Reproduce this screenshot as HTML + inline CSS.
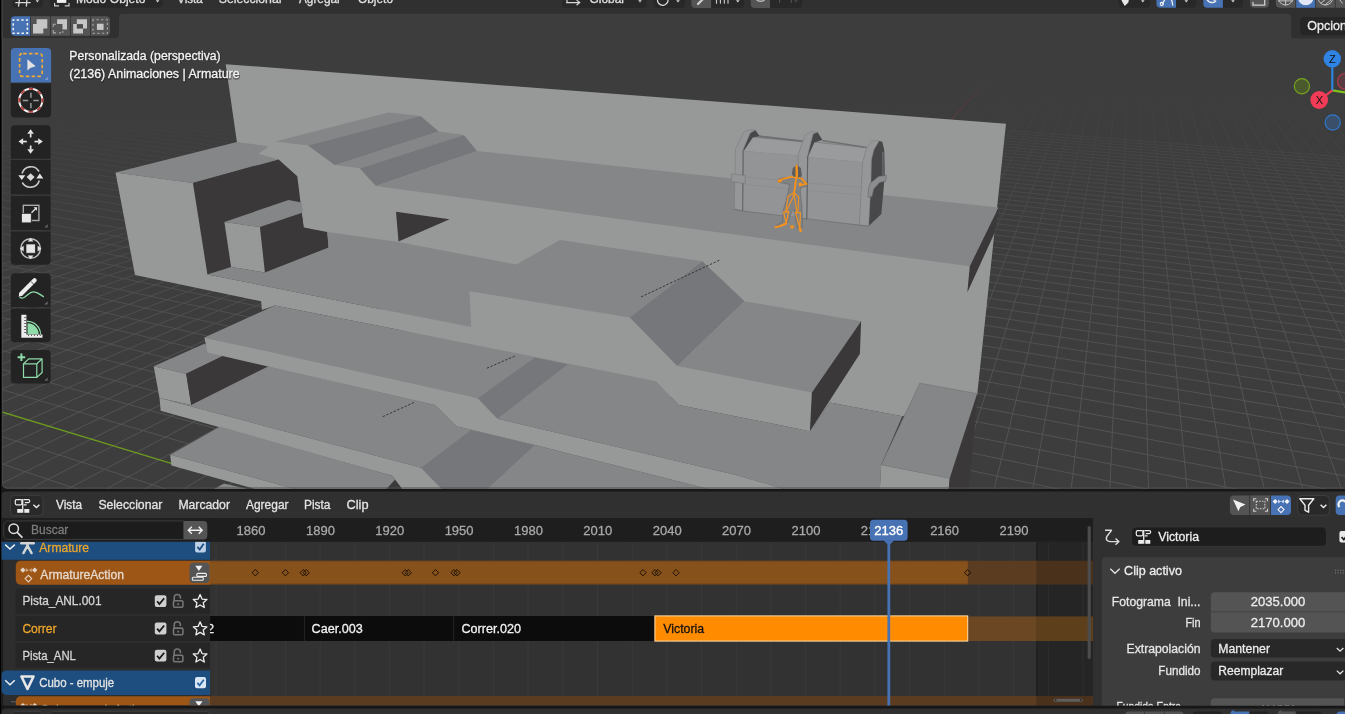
<!DOCTYPE html>
<html><head><meta charset="utf-8"><title>Blender</title>
<style>
html,body{margin:0;padding:0}
body{width:1345px;height:714px;overflow:hidden;background:#171717;position:relative;font-family:"Liberation Sans",sans-serif;font-size:12px;color:#e6e6e6}
#vp{position:absolute;left:1.7px;top:0;width:1344px;height:488.7px;background:#3d3d3d;border-radius:0 0 0 5px;overflow:hidden}
.abs{position:absolute}

</style></head>
<body>
<div id="ledge" class="abs" style="left:0;top:0;width:0.7px;height:714px;background:#000"></div>
<div id="vp">
<svg id="scene" width="1345" height="490" viewBox="0 0 1345 490" style="position:absolute;left:-1.7px;top:0">
<defs>
<linearGradient id="gf" x1="0" y1="118" x2="8" y2="438" gradientUnits="userSpaceOnUse">
<stop offset="0" stop-color="#fff" stop-opacity="0"/><stop offset="0.1" stop-color="#fff" stop-opacity="0.22"/><stop offset="0.3" stop-color="#fff" stop-opacity="0.5"/><stop offset="0.6" stop-color="#fff" stop-opacity="0.8"/><stop offset="1" stop-color="#fff" stop-opacity="1"/>
</linearGradient>
<linearGradient id="gf2" x1="0" y1="0" x2="0" y2="1"><stop offset="0" stop-color="#fff" stop-opacity="0"/><stop offset="0.15" stop-color="#fff" stop-opacity="0"/><stop offset="0.4" stop-color="#fff" stop-opacity="1"/><stop offset="1" stop-color="#fff" stop-opacity="1"/></linearGradient>
<mask id="gm2" maskUnits="userSpaceOnUse" x="0" y="0" width="1345" height="490"><rect x="0" y="0" width="1345" height="490" fill="url(#gf2)"/></mask>
<mask id="gm" maskUnits="userSpaceOnUse" x="0" y="0" width="1345" height="490"><rect x="0" y="0" width="1345" height="490" fill="url(#gf)"/></mask>
</defs>
<g mask="url(#gm)"><g stroke="#5a5a5a" stroke-width="0.9" opacity="0.9">
<line x1="-779.2" y1="500" x2="678.0" y2="60"/>
<line x1="-739.9" y1="500" x2="687.4" y2="60"/>
<line x1="-700.5" y1="500" x2="696.8" y2="60"/>
<line x1="-661.2" y1="500" x2="706.2" y2="60"/>
<line x1="-621.8" y1="500" x2="715.5" y2="60"/>
<line x1="-582.5" y1="500" x2="724.9" y2="60"/>
<line x1="-543.2" y1="500" x2="734.3" y2="60"/>
<line x1="-503.8" y1="500" x2="743.7" y2="60"/>
<line x1="-464.5" y1="500" x2="753.1" y2="60"/>
<line x1="-425.1" y1="500" x2="762.5" y2="60"/>
<line x1="-385.8" y1="500" x2="771.9" y2="60"/>
<line x1="-346.4" y1="500" x2="781.3" y2="60"/>
<line x1="-307.1" y1="500" x2="790.7" y2="60"/>
<line x1="-267.7" y1="500" x2="800.1" y2="60"/>
<line x1="-228.4" y1="500" x2="809.5" y2="60"/>
<line x1="-189.0" y1="500" x2="818.9" y2="60"/>
<line x1="-149.7" y1="500" x2="828.3" y2="60"/>
<line x1="-110.3" y1="500" x2="837.7" y2="60"/>
<line x1="-71.0" y1="500" x2="847.1" y2="60"/>
<line x1="-31.7" y1="500" x2="856.5" y2="60"/>
<line x1="7.7" y1="500" x2="865.8" y2="60"/>
<line x1="47.0" y1="500" x2="875.2" y2="60"/>
<line x1="86.4" y1="500" x2="884.6" y2="60"/>
<line x1="125.7" y1="500" x2="894.0" y2="60"/>
<line x1="165.1" y1="500" x2="903.4" y2="60"/>
<line x1="204.4" y1="500" x2="912.8" y2="60"/>
<line x1="243.8" y1="500" x2="922.2" y2="60"/>
<line x1="283.1" y1="500" x2="931.6" y2="60"/>
<line x1="322.5" y1="500" x2="941.0" y2="60"/>
<line x1="361.8" y1="500" x2="950.4" y2="60"/>
<line x1="401.2" y1="500" x2="959.8" y2="60"/>
<line x1="440.5" y1="500" x2="969.2" y2="60"/>
<line x1="479.8" y1="500" x2="978.6" y2="60"/>
<line x1="519.2" y1="500" x2="988.0" y2="60"/>
<line x1="558.5" y1="500" x2="997.4" y2="60"/>
<line x1="637.2" y1="500" x2="1016.2" y2="60"/>
<line x1="676.6" y1="500" x2="1025.5" y2="60"/>
<line x1="715.9" y1="500" x2="1034.9" y2="60"/>
<line x1="755.3" y1="500" x2="1044.3" y2="60"/>
<line x1="794.6" y1="500" x2="1053.7" y2="60"/>
<line x1="834.0" y1="500" x2="1063.1" y2="60"/>
<line x1="873.3" y1="500" x2="1072.5" y2="60"/>
<line x1="912.7" y1="500" x2="1081.9" y2="60"/>
<line x1="952.0" y1="500" x2="1091.3" y2="60"/>
<line x1="991.3" y1="500" x2="1100.7" y2="60"/>
<line x1="1030.7" y1="500" x2="1110.1" y2="60"/>
<line x1="1070.0" y1="500" x2="1119.5" y2="60"/>
<line x1="1109.4" y1="500" x2="1128.9" y2="60"/>
<line x1="1148.7" y1="500" x2="1138.3" y2="60"/>
<line x1="1188.1" y1="500" x2="1147.7" y2="60"/>
<line x1="1227.4" y1="500" x2="1157.1" y2="60"/>
<line x1="1266.8" y1="500" x2="1166.5" y2="60"/>
<line x1="1306.1" y1="500" x2="1175.9" y2="60"/>
<line x1="1345.5" y1="500" x2="1185.2" y2="60"/>
<line x1="1384.8" y1="500" x2="1194.6" y2="60"/>
<line x1="1424.2" y1="500" x2="1204.0" y2="60"/>
<line x1="1463.5" y1="500" x2="1213.4" y2="60"/>
<line x1="1502.8" y1="500" x2="1222.8" y2="60"/>
<line x1="1542.2" y1="500" x2="1232.2" y2="60"/>
<line x1="1581.5" y1="500" x2="1241.6" y2="60"/>
<line x1="1620.9" y1="500" x2="1251.0" y2="60"/>
<line x1="1660.2" y1="500" x2="1260.4" y2="60"/>
<line x1="1699.6" y1="500" x2="1269.8" y2="60"/>
<line x1="1738.9" y1="500" x2="1279.2" y2="60"/>
<line x1="1778.3" y1="500" x2="1288.6" y2="60"/>
<line x1="1817.6" y1="500" x2="1298.0" y2="60"/>
<line x1="1857.0" y1="500" x2="1307.4" y2="60"/>
<line x1="1896.3" y1="500" x2="1316.8" y2="60"/>
<line x1="1935.7" y1="500" x2="1326.2" y2="60"/>
<line x1="1975.0" y1="500" x2="1335.6" y2="60"/>
<line x1="2014.3" y1="500" x2="1344.9" y2="60"/>
<line x1="2053.7" y1="500" x2="1354.3" y2="60"/>
<line x1="2093.0" y1="500" x2="1363.7" y2="60"/>
<line x1="2132.4" y1="500" x2="1373.1" y2="60"/>
<line x1="-1329.7" y1="60" x2="376.5" y2="900"/>
<line x1="-1308.0" y1="60" x2="530.3" y2="900"/>
<line x1="-1286.3" y1="60" x2="684.1" y2="900"/>
<line x1="-1264.6" y1="60" x2="837.9" y2="900"/>
<line x1="-1242.9" y1="60" x2="991.8" y2="900"/>
<line x1="-1221.2" y1="60" x2="1145.6" y2="900"/>
<line x1="-1199.5" y1="60" x2="1299.4" y2="900"/>
<line x1="-1177.8" y1="60" x2="1453.2" y2="900"/>
<line x1="-1134.4" y1="60" x2="1760.8" y2="900"/>
<line x1="-1112.7" y1="60" x2="1914.6" y2="900"/>
<line x1="-1091.0" y1="60" x2="2068.4" y2="900"/>
<line x1="-1069.3" y1="60" x2="2222.2" y2="900"/>
<line x1="-1047.6" y1="60" x2="2376.0" y2="900"/>
<line x1="-1025.8" y1="60" x2="2529.9" y2="900"/>
<line x1="-1004.1" y1="60" x2="2683.7" y2="900"/>
<line x1="-982.4" y1="60" x2="2837.5" y2="900"/>
<line x1="-960.7" y1="60" x2="2991.3" y2="900"/>
<line x1="-939.0" y1="60" x2="3145.1" y2="900"/>
<line x1="-917.3" y1="60" x2="3298.9" y2="900"/>
<line x1="-895.6" y1="60" x2="3452.7" y2="900"/>
<line x1="-873.9" y1="60" x2="3606.5" y2="900"/>
<line x1="-852.2" y1="60" x2="3760.3" y2="900"/>
<line x1="-830.5" y1="60" x2="3914.1" y2="900"/>
<line x1="-808.8" y1="60" x2="4067.9" y2="900"/>
<line x1="-787.1" y1="60" x2="4221.8" y2="900"/>
<line x1="-765.4" y1="60" x2="4375.6" y2="900"/>
<line x1="-743.7" y1="60" x2="4529.4" y2="900"/>
<line x1="-722.0" y1="60" x2="4683.2" y2="900"/>
<line x1="-700.3" y1="60" x2="4837.0" y2="900"/>
<line x1="-678.6" y1="60" x2="4990.8" y2="900"/>
<line x1="-656.9" y1="60" x2="5144.6" y2="900"/>
<line x1="-635.2" y1="60" x2="5298.4" y2="900"/>
<line x1="-613.5" y1="60" x2="5452.2" y2="900"/>
<line x1="-591.8" y1="60" x2="5606.0" y2="900"/>
<line x1="-570.1" y1="60" x2="5759.9" y2="900"/>
<line x1="-548.4" y1="60" x2="5913.7" y2="900"/>
<line x1="-526.7" y1="60" x2="6067.5" y2="900"/>
<line x1="-505.0" y1="60" x2="6221.3" y2="900"/>
<line x1="-483.3" y1="60" x2="6375.1" y2="900"/>
<line x1="-461.6" y1="60" x2="6528.9" y2="900"/>
<line x1="-439.9" y1="60" x2="6682.7" y2="900"/>
<line x1="-418.2" y1="60" x2="6836.5" y2="900"/>
<line x1="-396.5" y1="60" x2="6990.3" y2="900"/>
<line x1="-374.8" y1="60" x2="7144.1" y2="900"/>
<line x1="-353.1" y1="60" x2="7298.0" y2="900"/>
<line x1="-331.3" y1="60" x2="7451.8" y2="900"/>
<line x1="-309.6" y1="60" x2="7605.6" y2="900"/>
<line x1="-287.9" y1="60" x2="7759.4" y2="900"/>
<line x1="-266.2" y1="60" x2="7913.2" y2="900"/>
<line x1="-244.5" y1="60" x2="8067.0" y2="900"/>
<line x1="-222.8" y1="60" x2="8220.8" y2="900"/>
<line x1="-201.1" y1="60" x2="8374.6" y2="900"/>
<line x1="-179.4" y1="60" x2="8528.4" y2="900"/>
<line x1="-157.7" y1="60" x2="8682.2" y2="900"/>
<line x1="-136.0" y1="60" x2="8836.0" y2="900"/>
<line x1="-114.3" y1="60" x2="8989.9" y2="900"/>
<line x1="-92.6" y1="60" x2="9143.7" y2="900"/>
<line x1="-70.9" y1="60" x2="9297.5" y2="900"/>
<line x1="-49.2" y1="60" x2="9451.3" y2="900"/>
<line x1="-27.5" y1="60" x2="9605.1" y2="900"/>
<line x1="-5.8" y1="60" x2="9758.9" y2="900"/>
<line x1="15.9" y1="60" x2="9912.7" y2="900"/>
<line x1="37.6" y1="60" x2="10066.5" y2="900"/>
<line x1="59.3" y1="60" x2="10220.3" y2="900"/>
<line x1="81.0" y1="60" x2="10374.1" y2="900"/>
<line x1="102.7" y1="60" x2="10528.0" y2="900"/>
<line x1="124.4" y1="60" x2="10681.8" y2="900"/>
</g></g>
<g mask="url(#gm2)"><line x1="-1156.1" y1="60.0" x2="172" y2="463.7" stroke="#6c9a1f" stroke-width="1.3"/>
<line x1="597.9" y1="500" x2="1006.8" y2="60" stroke="#9a3545" stroke-width="1.1"/></g>
<polygon points="225.7,64.2 1006.0,123.7 977.3,393.7 902.3,416.2 829.9,402.4 809.9,431.2 400.0,330.0 236.9,141.9" fill="#979998" />
<polygon points="236.9,141.9 115.5,172.4 192.9,182.9 278.6,159.4 290.0,150.0 267.4,146.2" fill="#858688" />
<polygon points="275.0,141.5 388.3,112.4 420.5,116.0 308.0,145.5" fill="#858688" />
<polygon points="308.0,145.5 420.5,116.0 438.8,131.5 335.0,165.3" fill="#76777a" />
<polygon points="335.0,165.3 438.8,131.5 463.8,135.0 359.5,168.4" fill="#858688" />
<polygon points="359.5,168.4 463.8,135.0 477.0,151.0 376.0,186.1" fill="#76777a" />
<polygon points="376.0,186.1 477.0,151.0 998.5,207.4 969.8,266.2" fill="#858688" />
<polygon points="998.5,207.4 969.8,266.2 967.3,292.4 994.8,232.5" fill="#3b3839" />
<polygon points="258.6,153.7 274.9,141.9 307.3,145.4 333.6,164.9 359.8,168.2 374.8,186.1 400.0,195.0 400.0,250.0 303.6,227.5 297.3,176.2 278.6,159.4" fill="#979998" />
<polygon points="192.9,182.9 278.6,159.4 297.3,176.2 303.6,227.5 327.3,232.0 328.6,247.5 264.9,272.4 231.1,267.0 207.4,274.4" fill="#3b3839" />
<polygon points="224.4,222.0 288.5,200.0 301.5,202.5 302.9,212.5 259.9,227.0" fill="#858688" />
<polygon points="224.4,222.0 259.9,227.0 264.9,272.4 231.1,267.0" fill="#979998" />
<polygon points="396.0,211.7 449.6,219.3 398.5,241.6" fill="#3b3839" />
<polygon points="115.5,172.4 192.9,182.9 207.4,274.4 400.0,312.9 471.2,326.9 469.4,291.2 629.8,317.4 677.3,366.1 811.9,392.4 809.9,431.2 678.5,404.9 656.0,381.2 400.0,330.0 274.9,305.4 261.9,309.9 261.1,301.2 135.0,275.0" fill="#979998" />
<polygon points="207.4,274.4 231.1,267.0 264.9,272.4 328.6,247.5 327.3,232.0 398.5,242.0 516.2,264.5 559.9,240.0 702.3,261.2 629.8,317.4 469.4,291.2 471.2,326.9 400.0,312.9" fill="#858688" />
<polygon points="702.3,261.2 744.5,301.2 677.3,366.1 629.8,317.4" fill="#76777a" />
<polygon points="744.5,301.2 861.1,321.2 811.9,392.4 677.3,366.1" fill="#858688" />
<polygon points="861.1,321.2 811.9,392.4 809.9,431.2 859.9,353.7" fill="#3b3839" />
<polygon points="274.9,305.4 400.0,330.0 656.0,381.2 678.5,404.9 809.9,431.2 829.9,402.4 902.3,416.2 881.1,464.9 879.9,490.0 787.4,490.0 736.0,474.9 497.4,418.7 477.9,398.2 436.0,392.4 204.4,337.5" fill="#858688" />
<polygon points="534.9,357.5 567.4,364.5 497.4,418.7 477.9,398.2" fill="#76777a" />
<polygon points="153.7,366.2 204.4,343.7 222.4,356.2 186.2,373.7" fill="#858688" />
<polygon points="153.7,366.2 186.2,373.7 191.2,404.9 159.5,397.9" fill="#979998" />
<polygon points="186.2,373.7 222.4,356.2 268.6,366.2 191.2,404.9" fill="#3b3839" />
<polygon points="191.2,404.9 268.6,366.2 435.0,405.0 456.2,426.2 534.9,444.9 712.3,490.0 442.7,490.0 421.2,467.8 159.5,397.9" fill="#858688" />
<polygon points="421.2,467.8 471.2,429.9 534.9,444.9 486.2,490.0 442.7,490.0" fill="#76777a" />
<polygon points="204.4,337.5 477.9,398.2 497.4,418.7 736.0,474.9 787.4,490.0 712.3,490.0 534.9,444.9 456.2,426.2 435.0,405.0 207.4,352.5" fill="#979998" />
<polygon points="159.5,397.9 421.2,467.8 442.7,490.0 402.2,490.0 392.7,476.1 160.7,410.7" fill="#979998" />
<polygon points="220.2,426.6 392.7,476.1 402.2,490.0 298.7,490.0 170.2,454.7" fill="#858688" />
<polygon points="385.5,490.0 395.0,479.7 403.0,490.0" fill="#3b3839" />
<polygon points="170.2,454.7 298.7,490.0 258.7,490.0 171.4,465.4" fill="#979998" />
<polygon points="212.0,490.0 224.0,483.5 252.0,490.0" fill="#858688" />
<polygon points="919.8,383.2 977.3,393.7 949.8,478.6 881.1,464.9" fill="#858688" stroke="#6d6e70" stroke-width="0.6"/>
<polygon points="881.1,464.9 949.8,478.6 948.6,490.0 879.9,490.0" fill="#979998" />
<polygon points="977.3,393.7 949.8,478.6 948.6,490.0 968.5,490.0 974.8,424.9" fill="#3b3839" />
<line x1="641.1" y1="296.9" x2="719.8" y2="260.0" stroke="#222" stroke-width="0.8" stroke-dasharray="2.4 1.6"/>
<line x1="486.9" y1="368.2" x2="515.7" y2="355.7" stroke="#222" stroke-width="0.8" stroke-dasharray="2.4 1.6"/>
<line x1="382.7" y1="416.7" x2="415.3" y2="401.9" stroke="#222" stroke-width="0.8" stroke-dasharray="2.4 1.6"/>
<polygon points="743.5,136.0 759.5,135.5 866.4,147.3 879.0,140.9 884.0,150.0 884.7,175.5 881.3,214.1 868.7,226.0 859.5,225.0 742.7,210.8" fill="#7c7d7f" />
<polygon points="752.7,137.5 802.3,142.2 798.1,155.6 743.9,151.0" fill="#999b9c" />
<polygon points="814.3,142.6 866.4,148.1 862.6,162.3 808.4,157.3" fill="#999b9c" />
<polygon points="743.9,151.0 798.1,155.6 799.0,219.0 742.7,210.8" fill="#929495" />
<polygon points="808.4,157.3 862.6,162.3 859.5,225.0 806.8,219.5" fill="#929495" />
<polyline points="759.5,136.2 802.3,141.2" fill="none" stroke="#6e6f71" stroke-width="1.5" />
<polyline points="822.3,140.5 866.4,147.6" fill="none" stroke="#6e6f71" stroke-width="1.5" />
<polyline points="745.2,177.0 799.0,182.0" fill="none" stroke="#858789" stroke-width="0.5" />
<polyline points="745.2,184.5 799.0,189.8" fill="none" stroke="#86888a" stroke-width="0.5" />
<polyline points="808.0,183.0 862.9,187.5" fill="none" stroke="#858789" stroke-width="0.5" />
<polyline points="808.0,190.5 862.5,195.2" fill="none" stroke="#86888a" stroke-width="0.5" />
<polygon points="879.0,140.9 882.3,141.8 884.2,149.7 884.7,175.5 881.3,214.1 868.7,226.0 871.0,182.0 871.4,159.8 873.9,149.7" fill="#48484a" />
<polyline points="882.8,152.0 883.0,176.0" fill="none" stroke="#8a8b8d" stroke-width="0.7" />
<polygon points="862.6,162.3 866.4,148.1 871.4,141.3 876.1,140.7 879.0,140.9 873.9,149.7 871.4,159.8 871.0,182.0 868.7,226.0 859.5,225.0" fill="#959798" stroke="#77787a" stroke-width="0.5"/>
<polygon points="870.4,183.0 878.8,176.3 886.4,175.5 885.5,181.3 879.7,182.5 873.8,188.9 872.1,196.5 867.9,197.3 868.7,187.2" fill="#8c8d8f" stroke="#5e5f61" stroke-width="0.5"/>
<polygon points="755.3,130.0 759.5,135.9 752.7,137.5 743.9,150.6 743.1,149.7 750.2,132.9" fill="#48484a" />
<polygon points="734.3,209.1 735.5,148.9 743.1,132.9 746.0,130.8 749.4,130.0 755.3,130.0 750.2,132.9 743.1,149.7 742.7,210.8" fill="#959798" stroke="#77787a" stroke-width="0.5"/>
<polyline points="743.1,150.0 742.7,210.8" fill="none" stroke="#5e5f61" stroke-width="0.9" />
<polygon points="731.4,173.8 745.2,175.5 745.2,183.5 731.4,181.8" fill="#939596" stroke="#707173" stroke-width="0.5"/>
<polygon points="817.6,132.1 822.3,140.1 814.3,142.6 807.6,156.5 807.6,155.6 813.0,134.0" fill="#48484a" />
<polygon points="799.0,219.0 798.1,155.6 802.3,142.2 805.7,134.6 810.9,131.7 817.6,132.1 813.0,134.0 807.6,155.6 806.8,219.5" fill="#959798" stroke="#77787a" stroke-width="0.5"/>
<polyline points="807.6,156.0 806.8,219.5" fill="none" stroke="#5e5f61" stroke-width="1" />
<polyline points="734.3,209.3 742.7,211.0 859.5,225.2 868.7,226.2" fill="none" stroke="#6b6c6e" stroke-width="0.7" />
<polygon points="792.9,168.0 796.6,164.8 800.9,168.0 801.9,176.0 798.7,178.1 793.9,177.6 791.8,173.8" fill="#5c5d5f" />
<polygon points="789.7,177.6 801.9,177.6 807.2,182.9 806.7,186.1 800.9,187.7 800.3,191.9 801.9,204.7 802.4,219.6 801.9,228.1 797.9,229.1 795.5,219.6 794.5,210.0 791.8,211.1 787.6,222.8 777.4,228.1 775.3,226.5 782.2,221.7 783.3,210.0 786.0,200.4 788.1,191.9 789.7,184.5 781.7,182.9 778.0,182.3 778.5,179.1 783.8,177.6" fill="#808284" stroke="#626365" stroke-width="0.5"/>
<polyline points="796.6,165.9 796.8,176.0" fill="none" stroke="#f5921e" stroke-width="2.4" stroke-linejoin="round" stroke-linecap="round"/>
<polyline points="796.4,176.5 795.5,184.5 793.9,193.0" fill="none" stroke="#f5921e" stroke-width="1.7" stroke-linejoin="round" stroke-linecap="round"/>
<polyline points="793.9,193.0 795.5,188.2 794.7,182.9" fill="none" stroke="#f5921e" stroke-width="0.9" stroke-linejoin="round" stroke-linecap="round"/>
<polyline points="791.3,177.0 801.9,178.6" fill="none" stroke="#f5921e" stroke-width="1.3" stroke-linejoin="round" stroke-linecap="round"/>
<polyline points="791.3,176.8 782.8,178.9 778.7,181.1" fill="none" stroke="#f5921e" stroke-width="1.7" stroke-linejoin="round" stroke-linecap="round"/>
<polygon points="777.7,179.7 781.5,178.9 781.9,181.8 778.5,182.9" fill="#f5921e" />
<polyline points="801.9,178.6 806.7,183.9 800.3,185.3" fill="none" stroke="#f5921e" stroke-width="1.5" stroke-linejoin="round" stroke-linecap="round"/>
<polygon points="798.5,182.9 801.9,182.6 802.4,186.1 798.9,186.6" fill="#f5921e" />
<polyline points="801.9,178.9 803.8,182.9 806.7,184.3" fill="none" stroke="#f5921e" stroke-width="0.9" stroke-linejoin="round" stroke-linecap="round"/>
<polyline points="793.9,192.4 788.1,196.2 785.7,211.9" fill="none" stroke="#f5921e" stroke-width="1.1" stroke-linejoin="round" stroke-linecap="round"/>
<polyline points="793.9,192.4 792.9,197.2 786.0,211.9" fill="none" stroke="#f5921e" stroke-width="1.1" stroke-linejoin="round" stroke-linecap="round"/>
<polyline points="793.9,192.4 798.7,197.2 797.9,211.9" fill="none" stroke="#f5921e" stroke-width="1.1" stroke-linejoin="round" stroke-linecap="round"/>
<polyline points="793.9,192.4 794.7,197.8 796.8,211.9" fill="none" stroke="#f5921e" stroke-width="1.1" stroke-linejoin="round" stroke-linecap="round"/>
<polyline points="783.6,212.1 788.7,211.7 786.2,223.4 783.6,212.1" fill="none" stroke="#f5921e" stroke-width="1.2" stroke-linejoin="round" stroke-linecap="round"/>
<polyline points="795.5,212.3 800.4,212.8 799.8,228.1 795.5,212.3" fill="none" stroke="#f5921e" stroke-width="1.2" stroke-linejoin="round" stroke-linecap="round"/>
<polyline points="786.2,223.4 780.6,226.0 775.5,227.2" fill="none" stroke="#f5921e" stroke-width="2.2" stroke-linejoin="round" stroke-linecap="round"/>
<polyline points="799.8,228.1 800.6,231.1" fill="none" stroke="#f5921e" stroke-width="2.4" stroke-linejoin="round" stroke-linecap="round"/>
<circle cx="792.0" cy="226.8" r="1.9" fill="#f5921e"/>
</svg>
<!-- viewport overlays: coordinates in page space via svg offset -->
<svg class="abs" style="left:-1.7px;top:0;will-change:transform" width="1345" height="490" viewBox="0 0 1345 490">
<!-- area outline highlight -->
<path d="M2.200 38V483.500a4.500 4.500 0 0 0 4.500 4.500H1345" fill="none" stroke="#4f4f4f" stroke-width="1"/>
<!-- toolbar -->
<path d="M14.800 48H47.100a4 4 0 0 1 4 4V82.400H10.800V52a4 4 0 0 1 4 -4Z" fill="#4772b3"/>
<path d="M10.800 83.200H51.100V113.600a4 4 0 0 1 -4 4H14.800a4 4 0 0 1 -4 -4Z" fill="#232323"/>
<path d="M14.800 125.200H46.600a4 4 0 0 1 4 4V158.800H10.800V129.200a4 4 0 0 1 4 -4Z" fill="#232323"/>
<rect x="10.800" y="159.900" width="39.800" height="34.600" fill="#232323"/>
<rect x="10.800" y="195.800" width="39.800" height="34.400" fill="#232323"/>
<path d="M10.800 231.500H50.600V260.700a4 4 0 0 1 -4 4H14.800a4 4 0 0 1 -4 -4Z" fill="#232323"/>
<path d="M14.800 273.300H46.600a4 4 0 0 1 4 4V307.200H10.800V277.300a4 4 0 0 1 4 -4Z" fill="#232323"/>
<path d="M10.800 308.400H50.600V338.200a4 4 0 0 1 -4 4H14.800a4 4 0 0 1 -4 -4Z" fill="#232323"/>
<rect x="10.800" y="350" width="39.800" height="33.500" rx="4" fill="#232323"/>
<!-- select icon -->
<rect x="19.600" y="53.700" width="22.600" height="22.600" rx="2.500" fill="none" stroke="#eda835" stroke-width="1.700" stroke-dasharray="3.600 2.200" stroke-dashoffset="-1"/>
<path d="M27.400 59.200V70.600L30.300 68.100L35.700 66.300Z" fill="#e2e2e2"/>
<path d="M44.600 80H48.100V76.500Z" fill="#7d9acb"/>
<!-- cursor icon -->
<circle cx="30.800" cy="100.300" r="11.600" fill="none" stroke="#f4f4f4" stroke-width="1.900"/>
<circle cx="30.800" cy="100.300" r="11.600" fill="none" stroke="#b5423f" stroke-width="1.900" stroke-dasharray="4.550 4.550" stroke-dashoffset="2.300"/>
<path d="M22.800 100.500H28.200M33.400 100.500H38.800M30.900 92.800V97.800M30.900 103V108.200" stroke="#9a9a9a" stroke-width="1.500"/>
<!-- move icon -->
<g fill="#e4e4e4">
<path d="M30.600 129.200L33.900 133.800H27.300Z"/><path d="M30.600 153.800L33.900 149.200H27.300Z"/>
<path d="M18.500 141.500L23.100 138.200V144.800Z"/><path d="M42.800 141.500L38.200 138.200V144.800Z"/>
<rect x="29.800" y="133.500" width="1.700" height="4"/><rect x="29.800" y="145.500" width="1.700" height="4"/>
<rect x="22.800" y="140.700" width="4" height="1.700"/><rect x="34.500" y="140.700" width="4" height="1.700"/>
</g>
<!-- rotate icon -->
<path d="M22 173.500a9.300 9.300 0 0 1 17 -2M39.300 180.500a9.300 9.300 0 0 1 -17 2" fill="none" stroke="#c9c9c9" stroke-width="1.600"/>
<path d="M18.300 175.200H25.300L21.800 180Z" fill="#e4e4e4"/><path d="M36.300 178.500H43.300L39.800 173.600Z" fill="#e4e4e4"/>
<path d="M30.600 173.300L34.600 177.100L30.600 180.900L26.600 177.100Z" fill="#d9d9d9"/>
<!-- scale icon -->
<rect x="23.300" y="205.300" width="15.600" height="15.200" fill="none" stroke="#a9a9a9" stroke-width="1.400"/>
<rect x="21.400" y="213.300" width="9.900" height="9.600" fill="#e6e6e6" stroke="#232323" stroke-width="0.800"/>
<path d="M31.500 212.800L36 208.200" stroke="#e6e6e6" stroke-width="1.300"/><path d="M33.600 207.300H37V210.700Z" fill="#e6e6e6"/>
<path d="M44.400 227.400H47.600V224.200Z" fill="#6a6a6a"/>
<!-- transform icon -->
<circle cx="30.600" cy="248.500" r="9.800" fill="none" stroke="#bdbdbd" stroke-width="1.500"/>
<rect x="26" y="244" width="9.300" height="9.200" fill="#e6e6e6" stroke="#232323" stroke-width="0.700"/>
<g fill="#e4e4e4"><path d="M30.600 237.800L33.400 241.600H27.800Z"/><path d="M30.600 259.300L33.400 255.500H27.800Z"/><path d="M19.900 248.600L23.700 245.800V251.400Z"/><path d="M41.400 248.600L37.600 245.800V251.400Z"/></g>
<!-- annotate icon -->
<path d="M19.600 297.200C25 301 28 291.500 33.500 291.800C38.500 292 40 295 43.800 296.800" fill="none" stroke="#8fdcaa" stroke-width="1.300"/>
<path d="M21.200 293.800L34.600 280.300" stroke="#ececec" stroke-width="4.200" stroke-linecap="round"/>
<path d="M18.600 296.700L19.600 292.600L22.500 295.500Z" fill="#ececec"/>
<path d="M31.200 281.800L33.800 284.200" stroke="#232323" stroke-width="0.800"/>
<path d="M44.400 304.500H47.600V301.300Z" fill="#6a6a6a"/>
<!-- measure icon -->
<path d="M27.500 334.200V323.200A11.200 11.200 0 0 1 38.700 334.200Z" fill="#8fdcaa"/>
<path d="M27 321.400A13.300 13.300 0 0 1 40.600 334.200" fill="none" stroke="#8fdcaa" stroke-width="1.100"/>
<path d="M21.300 314.800H26.400V334.400H42.500V337.800H21.300Z" fill="#ececec"/>
<path d="M24.200 317.500H26M24.200 320.500H26M24.200 323.500H26M24.200 326.500H26M24.200 329.500H26M24.200 332.500H26M28.500 334.800V336M31.500 334.800V336M34.500 334.800V336M37.500 334.800V336M40.300 334.800V336" stroke="#232323" stroke-width="0.700"/>
<!-- add cube icon -->
<g fill="none" stroke="#8fdcaa" stroke-width="1.200" stroke-linejoin="round">
<path d="M23.500 363.800H36.800V377.400H23.500Z"/><path d="M23.500 363.800L28.700 358.900H42.100L36.800 363.800M42.100 358.900V372.500L36.800 377.400"/>
</g>
<path d="M17.600 357.300H25.200M21.400 353.500V361.100" stroke="#8fdcaa" stroke-width="2"/>
<path d="M44.400 380.800H47.600V377.600Z" fill="#6a6a6a"/>
<!-- viewport text -->
<g font-family="Liberation Sans, sans-serif" font-size="12.300">
<g fill="#1c1c1c" stroke="#1c1c1c" stroke-width="1.600" opacity="0.450" stroke-linejoin="round">
<text x="69.600" y="60.300" textLength="151.300" lengthAdjust="spacingAndGlyphs">Personalizada (perspectiva)</text>
<text x="69.600" y="78.900" textLength="170.300" lengthAdjust="spacingAndGlyphs">(2136) Animaciones | Armature</text></g>
<g fill="#f4f4f4" stroke="#f4f4f4" stroke-width="0.300">
<text x="69.300" y="59.800" textLength="151.300" lengthAdjust="spacingAndGlyphs">Personalizada (perspectiva)</text>
<text x="69.300" y="78.400" textLength="170.300" lengthAdjust="spacingAndGlyphs">(2136) Animaciones | Armature</text></g>
</g>
<!-- gizmo -->
<g>
<circle cx="1345.500" cy="81.300" r="8" fill="#5b3b42" stroke="#b03c4c" stroke-width="1.200"/>
<path d="M1332.300 90.300L1345 92.400" stroke="#7fc01c" stroke-width="2.200"/>
<path d="M1332.300 90.300V60" stroke="#2f83e3" stroke-width="2.200"/>
<path d="M1332.300 90.300L1321 99" stroke="#f03c57" stroke-width="2.200"/>
<circle cx="1301.900" cy="86.300" r="7.600" fill="#4b5a2c" stroke="#79a621" stroke-width="1.200"/>
<circle cx="1332.700" cy="122.500" r="7.600" fill="#3a4f6a" stroke="#2f78cc" stroke-width="1.200"/>
<circle cx="1332.300" cy="58.800" r="8.700" fill="#2f83e3"/>
<circle cx="1319.200" cy="100" r="8.900" fill="#f03c57"/>
<g font-family="Liberation Sans, sans-serif" font-size="11" fill="#101010" text-anchor="middle">
<text x="1332.300" y="62.700">Z</text><text x="1319.300" y="104">X</text></g>
</g>
</svg>

</div>
<!-- top header strip -->
<svg class="abs" style="left:0;top:0;will-change:transform" width="1345" height="40" viewBox="0 0 1345 40">
<defs><clipPath id="hc"><rect x="0" y="0" width="1345" height="14"/></clipPath></defs>
<!-- header bg + tool settings region + options region -->
<path d="M1.7 0H1345V38.6H1295a4 4 0 0 1 -4 -4V17.8a4 4 0 0 0 -4 -4H123a4 4 0 0 0 -4 4V34a4 4 0 0 1 -4 4H1.7Z" fill="#303030"/>
<rect x="1.7" y="0" width="1" height="38" fill="#474747"/>
<g fill="#282828">
<rect x="12" y="-12" width="30.8" height="19.8" rx="4"/>
<rect x="50.2" y="-12" width="112.5" height="19.8" rx="4"/>
<rect x="561.9" y="-12" width="84.7" height="20.1" rx="4"/>
<rect x="653.4" y="-12" width="31.7" height="20.1" rx="4"/>
<rect x="691.3" y="-12" width="52.7" height="20.1" rx="4"/>
<rect x="750.7" y="-12" width="51.6" height="20.1" rx="4"/>
<rect x="1118.6" y="-12" width="31.4" height="19.8" rx="4"/>
<rect x="1156.4" y="-12" width="40" height="19.8" rx="4"/>
<rect x="1203.3" y="-12" width="39.7" height="19.8" rx="4"/>
</g>
<path d="M691.3 -5H711.1V8.1H695.3a4 4 0 0 1 -4 -4Z" fill="#545454"/>
<path d="M750.7 -5H770V8.1H754.7a4 4 0 0 1 -4 -4Z" fill="#545454"/>
<path d="M1156.4 -5H1176V7.8H1160.4a4 4 0 0 1 -4 -4Z" fill="#4772b3"/>
<path d="M1203.3 -5H1222.9V7.8H1207.3a4 4 0 0 1 -4 -4Z" fill="#4772b3"/>
<rect x="1250" y="-12" width="19" height="19.8" rx="4" fill="#545454"/>
<path d="M1275.8 -5H1295.4V7.8H1279.8a4 4 0 0 1 -4 -4Z" fill="#545454"/>
<rect x="1296.2" y="-5" width="19" height="12.8" fill="#4772b3"/>
<rect x="1316" y="-5" width="18.8" height="12.8" fill="#545454"/>
<rect x="1335.6" y="-5" width="12" height="12.8" fill="#545454"/>
<!-- icons -->
<g stroke="#d8d8d8" stroke-width="1.3" fill="none" stroke-linecap="round">
<path d="M15.8 2.7H30.1M19.6 -2L18.6 6M27 -2L26.4 6"/>
<path d="M54.6 3.4V5.9H58.5M69 3.4V5.9H65.2" stroke="#cfcfcf" stroke-width="1.2"/>
<path d="M567 2.2L567 -3M566.5 2.6H579.5M577 0.4L579.7 2.6L577 4.8" stroke-width="1.2"/>
<path d="M658 -2a5.2 5.2 0 1 0 8 -2" stroke-width="1.4"/>
<path d="M698 4L704 -2" stroke="#cfcfcf" stroke-width="2.2"/>
<path d="M715 -0.5H729M716.5 -4V3.2M720.4 -4V3.2M724.3 -4V3.2M728 -4V3.2" stroke="#cfcfcf" stroke-width="1.1"/>
<path d="M755.4 -3a5.3 5.3 0 0 0 10.4 0" stroke="#bdbdbd" stroke-width="1.3"/>
<path d="M776 -4c3 1 4 4 3.6 6.500M795 -4c-3 1 -4 4 -3.600 6.500" stroke="#555" stroke-width="1.1"/>
<path d="M1206.600 -2a5.500 5.500 0 0 0 9 3.200" stroke="#f0f0f0" stroke-width="1.5"/>
<path d="M1162.300 3.700L1166.500 -3M1169.500 -3C1171.500 -1 1172.500 2 1172.700 5" stroke="#f0f0f0" stroke-width="1.300"/>
<circle cx="1161.800" cy="4" r="1.600" stroke="#f0f0f0" stroke-width="1.100"/>
<path d="M1253 2.500V5.200H1264.700V-3" stroke="#cfcfcf" stroke-width="1.300"/>
<path d="M1278 -2.600a7.600 7.600 0 0 0 15.200 0M1278.500 0.900H1292.700M1285.600 -3V5" stroke="#c4c4c4" stroke-width="1"/>
<path d="M1317.800 -2.600a7.600 7.600 0 0 0 15.200 0M1321 3L1328.500 -3M1325 5L1332 -1" stroke="#c4c4c4" stroke-width="1"/>
<path d="M1339.500 -2a6 6 0 0 0 3 5.200" stroke="#cfcfcf" stroke-width="1"/>
</g>
<path d="M1297.900 -4H1313.600V-2.600a7.850 7.850 0 0 1 -15.700 0Z" fill="#e2e8f3"/>
<path d="M56.900 -3H66.300V2.900H56.900Z" fill="#f0f0f0"/>
<circle cx="760.600" cy="-3.400" r="3.600" fill="#bdbdbd"/>
<path d="M1120.500 -2L1129.200 -2L1128.300 2.600L1124.800 6.100L1122.200 1.700Z" fill="#e6e6e6"/>
<path d="M1212.500 -4h4.500v3.500a3 3 0 0 1 -4.500 0.500Z" fill="#f0f0f0"/>
<g fill="#d8d8d8">
<path d="M35.700 0.200H39.100L37.400 2.600Z"/>
<path d="M155.800 0.200H159.400L157.600 2.600Z"/>
<path d="M638.200 0.200H641.800L640 2.600Z"/>
<path d="M676.200 0.200H679.800L678 2.600Z"/>
<path d="M736 0.200H739.600L737.800 2.600Z"/>
<path d="M1141 0.200H1144.600L1142.800 2.600Z"/>
<path d="M1184.500 0.200H1188.100L1186.300 2.600Z"/>
<path d="M1231.200 0.200H1234.800L1233 2.600Z"/>
</g>
<path d="M794 0.200H797.600L795.800 2.600Z" fill="#4a4a4a"/>
<g font-family="Liberation Sans, sans-serif" font-size="12.3" fill="#e0e0e0" clip-path="url(#hc)" stroke="#e0e0e0" stroke-width="0.28">
<text x="76" y="2.600" textLength="69.500" lengthAdjust="spacingAndGlyphs">Modo Objeto</text>
<text x="177.200" y="2.600" textLength="25.500" lengthAdjust="spacingAndGlyphs">Vista</text>
<text x="218.800" y="2.600" textLength="64" lengthAdjust="spacingAndGlyphs">Seleccionar</text>
<text x="299" y="2.600" textLength="42" lengthAdjust="spacingAndGlyphs">Agregar</text>
<text x="358" y="2.600" textLength="35" lengthAdjust="spacingAndGlyphs">Objeto</text>
<text x="589.500" y="2.600" textLength="34.500" lengthAdjust="spacingAndGlyphs">Global</text>
</g>
<!-- select mode buttons -->
<path d="M14.800 16.200H30.200V35.800H14.800a4 4 0 0 1 -4 -4V20.200a4 4 0 0 1 4 -4Z" fill="#4772b3"/>
<rect x="31" y="16.200" width="19" height="19.600" fill="#545454"/>
<rect x="50.800" y="16.200" width="19.200" height="19.600" fill="#545454"/>
<rect x="70.800" y="16.200" width="19.200" height="19.600" fill="#545454"/>
<path d="M90.800 16.200H106a4 4 0 0 1 4 4V31.800a4 4 0 0 1 -4 4H90.800Z" fill="#545454"/>
<rect x="13.200" y="19.900" width="14.200" height="13.400" fill="none" stroke="#f2f2f2" stroke-width="1.500" stroke-dasharray="2.500 2.100" stroke-dashoffset="1.200"/>
<path d="M36.600 19.200H47.300V28.600H43.300V33.500H33V24.100H36.600Z" fill="#c6c6c6"/>
<path d="M57.100 19.200H67V29.500H62.500V24.100H57.100Z" fill="#c6c6c6"/>
<path d="M53.300 27V24.300H56M53.300 30V32.900H56M59 32.900H61M62.800 32.900V31" fill="none" stroke="#a8a8a8" stroke-width="1.100"/>
<path d="M76.800 19.200H87V28.600H83V33.500H73.200V24.100H76.800Z" fill="#c6c6c6"/>
<rect x="76.800" y="24.100" width="6.200" height="4.500" fill="#4c4c4c"/>
<rect x="93" y="19.800" width="14.400" height="13.500" fill="none" stroke="#a8a8a8" stroke-width="1.100" stroke-dasharray="2.300 2.300" stroke-dashoffset="1.100"/>
<rect x="96.900" y="23.700" width="6.700" height="6.200" fill="#c6c6c6"/>
<!-- options button -->
<path d="M1304 17H1345V35.300H1304a4 4 0 0 1 -4 -4V21a4 4 0 0 1 4 -4Z" fill="#262626"/>
<text x="1307.300" y="30.300" font-family="Liberation Sans, sans-serif" font-size="12.500" fill="#ececec" stroke="#ececec" stroke-width="0.28">Opciones</text>
</svg>

<svg class="abs" style="left:0;top:0;will-change:transform" width="1345" height="714" viewBox="0 0 1345 714" font-family="Liberation Sans, sans-serif">
<defs><clipPath id="nc"><path d="M5.700 491.400H1345V705.600H5.400a4 4 0 0 1 -4 -4V540H1.700V495.400a4 4 0 0 1 4 -4Z"/></clipPath>
<clipPath id="tc"><rect x="209.8" y="541.800" width="883.2" height="164"/></clipPath>
<clipPath id="cc"><rect x="0" y="541.600" width="210.1" height="164"/></clipPath></defs>
<g clip-path="url(#nc)">
<rect x="0" y="491" width="1345" height="215" fill="#303030"/>
<rect x="0" y="541.600" width="209.8" height="165" fill="#2d2d2d"/>
<rect x="209.8" y="518.100" width="883.2" height="188" fill="#323232"/>
<rect x="1036.8" y="541.800" width="56.2" height="165" fill="#252525"/>
<g clip-path="url(#tc)">
<rect x="215.52" y="541" width="1" height="165" fill="#3a3a3a"/>
<rect x="250.20" y="541" width="1" height="165" fill="#3a3a3a"/>
<rect x="284.88" y="541" width="1" height="165" fill="#3a3a3a"/>
<rect x="319.56" y="541" width="1" height="165" fill="#3a3a3a"/>
<rect x="354.24" y="541" width="1" height="165" fill="#3a3a3a"/>
<rect x="388.92" y="541" width="1" height="165" fill="#3a3a3a"/>
<rect x="423.60" y="541" width="1" height="165" fill="#3a3a3a"/>
<rect x="458.28" y="541" width="1" height="165" fill="#3a3a3a"/>
<rect x="492.96" y="541" width="1" height="165" fill="#3a3a3a"/>
<rect x="527.64" y="541" width="1" height="165" fill="#3a3a3a"/>
<rect x="562.32" y="541" width="1" height="165" fill="#3a3a3a"/>
<rect x="597.00" y="541" width="1" height="165" fill="#3a3a3a"/>
<rect x="631.68" y="541" width="1" height="165" fill="#3a3a3a"/>
<rect x="666.36" y="541" width="1" height="165" fill="#3a3a3a"/>
<rect x="701.04" y="541" width="1" height="165" fill="#3a3a3a"/>
<rect x="735.72" y="541" width="1" height="165" fill="#3a3a3a"/>
<rect x="770.40" y="541" width="1" height="165" fill="#3a3a3a"/>
<rect x="805.08" y="541" width="1" height="165" fill="#3a3a3a"/>
<rect x="839.76" y="541" width="1" height="165" fill="#3a3a3a"/>
<rect x="874.44" y="541" width="1" height="165" fill="#3a3a3a"/>
<rect x="909.12" y="541" width="1" height="165" fill="#3a3a3a"/>
<rect x="943.80" y="541" width="1" height="165" fill="#3a3a3a"/>
<rect x="978.48" y="541" width="1" height="165" fill="#3a3a3a"/>
<rect x="1013.16" y="541" width="1" height="165" fill="#3a3a3a"/>
<rect x="1047.84" y="541" width="1" height="165" fill="#2e2e2e"/>
<rect x="1082.52" y="541" width="1" height="165" fill="#2e2e2e"/>
<rect x="1036.3" y="541" width="1" height="165" fill="#1c1c1c"/>
<rect x="209.8" y="560.700" width="758.1" height="23.800" fill="#7b4a1c"/>
<rect x="209.8" y="562.200" width="758.1" height="21" fill="#87511c"/>
<rect x="967.9" y="560.700" width="68.9" height="23.800" fill="#5b3c20"/>
<rect x="1036.8" y="560.700" width="56.2" height="23.800" fill="#4a311c"/>
<path d="M252.1 572.7L255.3 569.5L258.5 572.7L255.3 575.9Z" fill="none" stroke="#1e1105" stroke-width="1"/>
<path d="M282.2 572.7L285.4 569.5L288.6 572.7L285.4 575.9Z" fill="none" stroke="#1e1105" stroke-width="1"/>
<path d="M432.3 572.7L435.5 569.5L438.7 572.7L435.5 575.9Z" fill="none" stroke="#1e1105" stroke-width="1"/>
<path d="M639.8 572.7L643.0 569.5L646.2 572.7L643.0 575.9Z" fill="none" stroke="#1e1105" stroke-width="1"/>
<path d="M672.8 572.7L676.0 569.5L679.2 572.7L676.0 575.9Z" fill="none" stroke="#1e1105" stroke-width="1"/>
<path d="M964.4 572.7L967.6 569.5L970.8 572.7L967.6 575.9Z" fill="none" stroke="#1e1105" stroke-width="1"/>
<path d="M300.0 572.7L303.2 569.5L306.4 572.7L303.2 575.9Z" fill="none" stroke="#1e1105" stroke-width="1"/>
<path d="M303.0 572.7L306.2 569.5L309.4 572.7L306.2 575.9Z" fill="none" stroke="#1e1105" stroke-width="1"/>
<path d="M402.0 572.7L405.2 569.5L408.4 572.7L405.2 575.9Z" fill="none" stroke="#1e1105" stroke-width="1"/>
<path d="M405.0 572.7L408.2 569.5L411.4 572.7L408.2 575.9Z" fill="none" stroke="#1e1105" stroke-width="1"/>
<path d="M450.8 572.7L454.0 569.5L457.2 572.7L454.0 575.9Z" fill="none" stroke="#1e1105" stroke-width="1"/>
<path d="M453.8 572.7L457.0 569.5L460.2 572.7L457.0 575.9Z" fill="none" stroke="#1e1105" stroke-width="1"/>
<path d="M651.8 572.7L655.0 569.5L658.2 572.7L655.0 575.9Z" fill="none" stroke="#1e1105" stroke-width="1"/>
<path d="M654.8 572.7L658.0 569.5L661.2 572.7L658.0 575.9Z" fill="none" stroke="#1e1105" stroke-width="1"/>
<rect x="209.8" y="616" width="444.8" height="25" fill="#0c0c0c"/>
<rect x="303.900" y="616" width="1" height="25" fill="#242424"/><rect x="453.100" y="616" width="1" height="25" fill="#242424"/>
<rect x="968" y="616.400" width="68.8" height="24.600" fill="#6b4823"/>
<rect x="1036.8" y="616.400" width="56.2" height="24.600" fill="#5e3f1b"/>
<rect x="654.900" y="615.900" width="312.800" height="25.200" fill="#ff8c00" stroke="#ffdcaa" stroke-width="1"/>
<g font-size="12.300" fill="#f2f2f2" stroke="#f2f2f2" stroke-width="0.28">
<text x="207.300" y="633">2</text>
<text x="311.600" y="633" textLength="51.200" lengthAdjust="spacingAndGlyphs">Caer.003</text>
<text x="461.500" y="633" textLength="59.400" lengthAdjust="spacingAndGlyphs">Correr.020</text>
<text x="663.300" y="633" textLength="40.800" lengthAdjust="spacingAndGlyphs" fill="#111" stroke="#111" stroke-width="0.28">Victoria</text></g>
<rect x="209.8" y="696" width="827.0" height="12" fill="#5b3c20"/>
<rect x="1036.8" y="696" width="56.2" height="12" fill="#4a311c"/>
</g>
<rect x="209.8" y="518.100" width="883.2" height="23.700" fill="#1e1e1e"/>
<g font-size="13" fill="#a9a9a9" text-anchor="middle" stroke="#a9a9a9" stroke-width="0.28">
<text x="251.0" y="535">1860</text>
<text x="320.4" y="535">1890</text>
<text x="389.7" y="535">1920</text>
<text x="459.1" y="535">1950</text>
<text x="528.4" y="535">1980</text>
<text x="597.8" y="535">2010</text>
<text x="667.2" y="535">2040</text>
<text x="736.5" y="535">2070</text>
<text x="805.9" y="535">2100</text>
<text x="875.2" y="535">2130</text>
<text x="944.6" y="535">2160</text>
<text x="1014.0" y="535">2190</text>
</g>
<rect x="887.4" y="541" width="2.800" height="165" fill="#4772b3"/>
<path d="M883.3 540.200L888.8 545.600L894.3 540.200Z" fill="#4772b3"/>
<rect x="870.0" y="519.700" width="37.600" height="21" rx="3.500" fill="#4772b3"/>
<text x="888.8" y="535" font-size="13" fill="#ffffff" text-anchor="middle" stroke="#fff" stroke-width="0.350">2136</text>
<rect x="1087.600" y="526" width="3.200" height="133" rx="1.600" fill="#4c4c4c"/>
<rect x="1053.600" y="698.700" width="29.300" height="3" rx="1.500" fill="#5f5f5f"/>
<rect x="1054.800" y="699.400" width="1.600" height="1.600" fill="#222"/><rect x="1080" y="699.400" width="1.600" height="1.600" fill="#222"/>
<rect x="10.700" y="701" width="5.300" height="1.400" fill="#505050"/>
<g clip-path="url(#cc)">
<rect x="0" y="541.600" width="3.100" height="165" fill="#1a1a1a"/>
<path d="M5.400 534.700H210.100V559.800H1.400V538.700a4 4 0 0 1 4 -4Z" fill="#1d4e7f"/>
<path d="M5.200 544.600L10 549L14.800 544.600" fill="none" stroke="#f0f0f0" stroke-width="1.500"/>
<g stroke="#d4d4d4" stroke-width="2.600" stroke-linecap="round" fill="none"><path d="M21.300 543.300H33.700M27.500 543.300V546.500M27.300 546L23.500 553M27.700 546L31.500 553"/></g>
<circle cx="27.500" cy="539.800" r="2" fill="#d4d4d4"/>
<text x="39.300" y="551.700" font-size="12.300" fill="#eea62a" textLength="49.800" lengthAdjust="spacingAndGlyphs" stroke="#eea62a" stroke-width="0.28">Armature</text>
<rect x="195.1" y="540.8" width="10.8" height="11.6" rx="2" fill="#bcd0e8"/><path d="M197.4 546.8L199.7 549.5L203.7 543.7" fill="none" stroke="#1d4e7f" stroke-width="1.800"/>
<path d="M20.800 560.700H210.100V584.700H20.800a5 5 0 0 1 -5 -5V565.700a5 5 0 0 1 5 -5Z" fill="#9e5616"/>
<path d="M20.2 570.1L22.9 567.4L25.6 570.1L22.9 572.8Z" fill="#e3d6c8" stroke="none" stroke-width="1.100"/>
<path d="M32.0 570.1L34.7 567.4L37.4 570.1L34.7 572.8Z" fill="#e3d6c8" stroke="none" stroke-width="1.100"/>
<path d="M25.800 568L31.800 572.200V568L25.800 572.200Z" fill="#c9a27c"/>
<path d="M25.1 578.6L28.4 575.3L31.7 578.6L28.4 581.9Z" fill="none" stroke="#e3d6c8" stroke-width="1.100"/>
<text x="40.300" y="578.500" font-size="12.300" fill="#e6dbd0" textLength="83.600" lengthAdjust="spacingAndGlyphs" stroke="#e6dbd0" stroke-width="0.28">ArmatureAction</text>
<rect x="189.500" y="562.800" width="20.100" height="20.100" rx="4" fill="#545454"/>
<path d="M195.300 565.800H202.500L198.900 570.900Z" fill="#f0f0f0"/>
<rect x="196.800" y="573.400" width="9.600" height="3" rx="1" fill="none" stroke="#f0f0f0" stroke-width="1.100"/><rect x="192.300" y="577.200" width="11" height="3" rx="1" fill="#545454" stroke="#f0f0f0" stroke-width="1.100"/>
<rect x="15.500" y="588.6" width="195" height="25.0" fill="#262626"/>
<text x="22.400" y="605.4" font-size="12.300" fill="#d6d6d6" textLength="79.2" lengthAdjust="spacingAndGlyphs" stroke="#d6d6d6" stroke-width="0.28">Pista_ANL.001</text>
<rect x="154.8" y="595.2" width="11.6" height="11.8" rx="2" fill="#cfcfcf"/><path d="M157.1 601.3L159.4 604.1L164.2 598.2" fill="none" stroke="#1a1a1a" stroke-width="1.800"/>
<path d="M174.2 600.9V597.5a3.100 3.100 0 0 1 6.200 0V598.7" fill="none" stroke="#767676" stroke-width="1.550"/><rect x="173.5" y="600.7" width="9.400" height="6.600" rx="1.200" fill="none" stroke="#767676" stroke-width="1.550"/><rect x="177.3" y="603.3" width="1.800" height="1.800" fill="#767676"/>
<polygon points="200.10,594.50 202.04,599.03 206.95,599.48 203.24,602.72 204.33,607.52 200.10,605.00 195.87,607.52 196.96,602.72 193.25,599.48 198.16,599.03" fill="none" stroke="#ececec" stroke-width="1.300" stroke-linejoin="round"/>
<rect x="15.500" y="616.1" width="195" height="24.7" fill="#262626"/>
<text x="22.400" y="632.8" font-size="12.300" fill="#eea62a" textLength="34.2" lengthAdjust="spacingAndGlyphs" stroke="#eea62a" stroke-width="0.28">Correr</text>
<rect x="154.8" y="622.6" width="11.6" height="11.8" rx="2" fill="#cfcfcf"/><path d="M157.1 628.7L159.4 631.4L164.2 625.5" fill="none" stroke="#1a1a1a" stroke-width="1.800"/>
<path d="M174.2 628.2V624.9a3.100 3.100 0 0 1 6.200 0V626.1" fill="none" stroke="#767676" stroke-width="1.550"/><rect x="173.5" y="628.1" width="9.400" height="6.600" rx="1.200" fill="none" stroke="#767676" stroke-width="1.550"/><rect x="177.3" y="630.7" width="1.800" height="1.800" fill="#767676"/>
<polygon points="200.10,621.85 202.04,626.38 206.95,626.83 203.24,630.07 204.33,634.87 200.10,632.35 195.87,634.87 196.96,630.07 193.25,626.83 198.16,626.38" fill="none" stroke="#ececec" stroke-width="1.300" stroke-linejoin="round"/>
<rect x="15.500" y="643.2" width="195" height="24.8" fill="#262626"/>
<text x="22.400" y="659.9" font-size="12.300" fill="#d6d6d6" textLength="53.5" lengthAdjust="spacingAndGlyphs" stroke="#d6d6d6" stroke-width="0.28">Pista_ANL</text>
<rect x="154.8" y="649.7" width="11.6" height="11.8" rx="2" fill="#cfcfcf"/><path d="M157.1 655.8L159.4 658.6L164.2 652.7" fill="none" stroke="#1a1a1a" stroke-width="1.800"/>
<path d="M174.2 655.4V652.0a3.100 3.100 0 0 1 6.200 0V653.2" fill="none" stroke="#767676" stroke-width="1.550"/><rect x="173.5" y="655.2" width="9.400" height="6.600" rx="1.200" fill="none" stroke="#767676" stroke-width="1.550"/><rect x="177.3" y="657.8" width="1.800" height="1.800" fill="#767676"/>
<polygon points="200.10,649.00 202.04,653.53 206.95,653.98 203.24,657.22 204.33,662.02 200.10,659.50 195.87,662.02 196.96,657.22 193.25,653.98 198.16,653.53" fill="none" stroke="#ececec" stroke-width="1.300" stroke-linejoin="round"/>
<path d="M6.400 670.400H210.100V695H6.400a5 5 0 0 1 -5 -5V675.400a5 5 0 0 1 5 -5Z" fill="#1d4e7f"/>
<path d="M5.200 680.300L10 684.700L14.800 680.300" fill="none" stroke="#f0f0f0" stroke-width="1.500"/>
<path d="M21.500 676.500H33.500L27.500 689Z" fill="none" stroke="#e8e8e8" stroke-width="2.600" stroke-linejoin="round"/>
<text x="39.200" y="687" font-size="12.300" fill="#e4e4e4" textLength="75" lengthAdjust="spacingAndGlyphs" stroke="#e4e4e4" stroke-width="0.28">Cubo - empuje</text>
<rect x="195.0" y="676.9" width="11.0" height="11.4" rx="2" fill="#dbe6f4"/><path d="M197.3 682.8L199.6 685.4L203.8 679.8" fill="none" stroke="#2a66a8" stroke-width="1.800"/>
<path d="M20.800 696.200H210.100V720H15.800V701.200a5 5 0 0 1 5 -5Z" fill="#9e5616"/>
<path d="M20.2 705.6L22.9 702.9L25.6 705.6L22.9 708.3Z" fill="#e3d6c8" stroke="none" stroke-width="1.100"/>
<path d="M32.0 705.6L34.7 702.9L37.4 705.6L34.7 708.3Z" fill="#e3d6c8" stroke="none" stroke-width="1.100"/>
<path d="M25.800 703.500L31.800 707.700V703.500L25.800 707.700Z" fill="#c9a27c"/>
<rect x="189.500" y="698.300" width="20.100" height="20.100" rx="4" fill="#545454"/>
<path d="M195.300 701.300H202.500L198.900 706.400Z" fill="#f0f0f0"/>
<text x="40.300" y="714" font-size="12.300" fill="#e6dbd0" stroke="#e6dbd0" stroke-width="0.28">Cubo-empujeAction</text>
</g>
<rect x="0" y="518.100" width="210.3" height="23.600" fill="#1e1e1e"/>
<path d="M8.200 520.900H183.700V539.400H8.200a4.500 4.500 0 0 1 -4.500 -4.500V525.400a4.500 4.500 0 0 1 4.500 -4.500Z" fill="#1c1c1c" stroke="#3c3c3c" stroke-width="1"/>
<path d="M183.700 520.900H203.300a4 4 0 0 1 4 4V535.400a4 4 0 0 1 -4 4H183.700Z" fill="#555555"/>
<path d="M188.500 530.200H202M191.800 526.700L188.300 530.200L191.800 533.700M198.700 526.700L202.200 530.200L198.700 533.700" fill="none" stroke="#f0f0f0" stroke-width="1.400"/>
<circle cx="13.700" cy="528.700" r="4.700" fill="none" stroke="#e0e0e0" stroke-width="1.500"/><path d="M17 532.200L22.400 537.600" stroke="#e0e0e0" stroke-width="1.700"/>
<text x="31" y="533.900" font-size="12.300" fill="#7c7c7c" textLength="37.300" lengthAdjust="spacingAndGlyphs" stroke="#7c7c7c" stroke-width="0.28">Buscar</text>
<rect x="10.500" y="495.300" width="32.500" height="20.400" rx="4" fill="#292929" stroke="#3e3e3e" stroke-width="1"/>
<g fill="none" stroke="#ececec" stroke-width="1.200"><rect x="15.3" y="499.6" width="6.600" height="5.200" rx="1.200"/><path d="M23.6 499.6H28.2a1.500 1.500 0 0 1 0 3H24.8M23.6 504.8H26.6"/><path d="M22.7 499.0V512.8" stroke-width="1.300"/></g><rect x="17.2" y="509.0" width="4.800" height="3.800" fill="#ececec"/><rect x="24.3" y="509.0" width="5" height="3.800" fill="#ececec"/>
<path d="M33.400 504.700L36.400 507.600L39.400 504.700" fill="none" stroke="#ececec" stroke-width="1.400"/>
<g font-size="12.300" fill="#e4e4e4" stroke="#e4e4e4" stroke-width="0.28">
<text x="56.0" y="509" textLength="26.0" lengthAdjust="spacingAndGlyphs">Vista</text>
<text x="98.4" y="509" textLength="64.0" lengthAdjust="spacingAndGlyphs">Seleccionar</text>
<text x="178.4" y="509" textLength="51.6" lengthAdjust="spacingAndGlyphs">Marcador</text>
<text x="246.0" y="509" textLength="42.5" lengthAdjust="spacingAndGlyphs">Agregar</text>
<text x="304.0" y="509" textLength="26.5" lengthAdjust="spacingAndGlyphs">Pista</text>
<text x="346.5" y="509" textLength="22.0" lengthAdjust="spacingAndGlyphs">Clip</text>
</g>
<path d="M1233.900 495.400H1249.300V515H1233.900a4 4 0 0 1 -4 -4V499.400a4 4 0 0 1 4 -4Z" fill="#545454"/>
<rect x="1250.100" y="495.400" width="20.100" height="19.600" fill="#545454"/>
<path d="M1271 495.400H1287a4 4 0 0 1 4 4V511a4 4 0 0 1 -4 4H1271Z" fill="#4772b3"/>
<path d="M1233 499.600L1238.400 511.200L1240.200 507.200L1245.500 504.500Z" fill="#f0f0f0"/>
<g fill="none" stroke="#d0d0d0" stroke-width="1.100"><path d="M1253.700 501.300V498.800H1256.300M1264.900 498.800H1267.500V501.300M1267.500 508.700V511.300H1264.900M1256.300 511.300H1253.700V508.700"/><rect x="1256.300" y="501.200" width="8.600" height="7.600" stroke-dasharray="1.600 1.200"/></g>
<path d="M1272.6 501.4L1275.1 498.9L1277.6 501.4L1275.1 503.9Z" fill="#f4f4f4" stroke="none" stroke-width="1.100"/>
<path d="M1284.5 501.4L1287.0 498.9L1289.5 501.4L1287.0 503.9Z" fill="#f4f4f4" stroke="none" stroke-width="1.100"/>
<path d="M1278 499.400L1284 503.400V499.400L1278 503.400Z" fill="#c7d6ee"/>
<path d="M1278.0 509.6L1281.0 506.6L1284.0 509.6L1281.0 512.6Z" fill="none" stroke="#f4f4f4" stroke-width="1.100"/>
<rect x="1297.700" y="495.500" width="31.600" height="19.700" rx="4" fill="#292929" stroke="#3e3e3e" stroke-width="1"/>
<path d="M1299.800 498.800H1313.800L1308.600 505.300V512.200L1305 510.300V505.300Z" fill="none" stroke="#ececec" stroke-width="1.400" stroke-linejoin="round"/>
<path d="M1320.600 504.700L1323.500 507.600L1326.400 504.700" fill="none" stroke="#ececec" stroke-width="1.400"/>
<path d="M1339.700 495.400H1346V515H1339.700a4 4 0 0 1 -4 -4V499.400a4 4 0 0 1 4 -4Z" fill="#4772b3"/>
<path d="M1339.500 507a4 4 0 0 1 4 -6.500l3 2" fill="none" stroke="#f4f4f4" stroke-width="2.200"/>
<rect x="1093" y="518.100" width="252" height="190" fill="#303030"/>
<path d="M1105 530.300H1111.500L1106.800 536.500C1105 540.800 1109 541.800 1111.500 541.600H1118.500M1115.500 538.400L1118.900 541.600L1115.500 544.800" fill="none" stroke="#dcdcdc" stroke-width="1.400" stroke-linejoin="round"/>
<rect x="1131.700" y="527" width="194.700" height="19.300" rx="4" fill="#1d1d1d" stroke="#3a3a3a" stroke-width="0.600"/>
<g fill="none" stroke="#ececec" stroke-width="1.200"><rect x="1136.3" y="530.6" width="6.600" height="5.200" rx="1.200"/><path d="M1144.6 530.6H1149.2a1.500 1.500 0 0 1 0 3H1145.8M1144.6 535.8H1147.6"/><path d="M1143.7 530.0V543.8" stroke-width="1.300"/></g><rect x="1138.2" y="540.0" width="4.800" height="3.800" fill="#ececec"/><rect x="1145.3" y="540.0" width="5" height="3.800" fill="#ececec"/>
<text x="1158.200" y="540.800" font-size="12.300" fill="#ececec" textLength="40.800" lengthAdjust="spacingAndGlyphs" stroke="#ececec" stroke-width="0.28">Victoria</text>
<rect x="1339.400" y="531" width="12" height="11.600" rx="2" fill="#e8e8e8"/><path d="M1341.500 537L1343.800 539.500L1348 534" fill="none" stroke="#222" stroke-width="1.800"/>
<path d="M1105.800 557.300H1346V710H1101.800V561.300a4 4 0 0 1 4 -4Z" fill="#3d3d3d"/>
<path d="M1110.300 568.700L1115 573.200L1119.700 568.700" fill="none" stroke="#e0e0e0" stroke-width="1.400"/>
<text x="1124.100" y="575" font-size="12.300" fill="#ececec" textLength="57.800" lengthAdjust="spacingAndGlyphs" stroke="#ececec" stroke-width="0.28">Clip activo</text>
<rect x="1335.0" y="569.8" width="1.100" height="1.100" fill="#7c7c7c"/>
<rect x="1335.0" y="572.4" width="1.100" height="1.100" fill="#7c7c7c"/>
<rect x="1337.6" y="569.8" width="1.100" height="1.100" fill="#7c7c7c"/>
<rect x="1337.6" y="572.4" width="1.100" height="1.100" fill="#7c7c7c"/>
<rect x="1340.2" y="569.8" width="1.100" height="1.100" fill="#7c7c7c"/>
<rect x="1340.2" y="572.4" width="1.100" height="1.100" fill="#7c7c7c"/>
<rect x="1342.8" y="569.8" width="1.100" height="1.100" fill="#7c7c7c"/>
<rect x="1342.8" y="572.4" width="1.100" height="1.100" fill="#7c7c7c"/>
<g font-size="12.300" fill="#e6e6e6" stroke="#e6e6e6" stroke-width="0.28">
<text x="1111.800" y="605.900" textLength="88.700" lengthAdjust="spacingAndGlyphs" style="white-space:pre">Fotograma  Ini...</text>
<text x="1185.400" y="626.500" textLength="15.100" lengthAdjust="spacingAndGlyphs">Fin</text>
<text x="1126.600" y="652.500" textLength="73.900" lengthAdjust="spacingAndGlyphs">Extrapolación</text>
<text x="1158.300" y="675.100" textLength="42.200" lengthAdjust="spacingAndGlyphs">Fundido</text>
<text x="1116.500" y="711.200" textLength="73" lengthAdjust="spacingAndGlyphs">Fundido Entra...</text>
</g>
<path d="M1214.800 592.200H1346V611.400H1210.800V596.200a4 4 0 0 1 4 -4Z" fill="#545454"/>
<path d="M1210.800 612.200H1346V632.400H1214.800a4 4 0 0 1 -4 -4Z" fill="#545454"/>
<g font-size="12.800" fill="#ececec" text-anchor="middle" stroke="#ececec" stroke-width="0.28"><text x="1278" y="606.100" textLength="54.500" lengthAdjust="spacingAndGlyphs">2035.000</text><text x="1278" y="626.700" textLength="54.500" lengthAdjust="spacingAndGlyphs">2170.000</text><text x="1278" y="711.400">0.000</text></g>
<path d="M1214.800 639H1346V657.600H1214.800a4 4 0 0 1 -4 -4V643a4 4 0 0 1 4 -4Z" fill="#282828"/>
<path d="M1214.800 661.400H1346V680.400H1214.800a4 4 0 0 1 -4 -4V665.400a4 4 0 0 1 4 -4Z" fill="#282828"/>
<g font-size="12.300" fill="#ececec" stroke="#ececec" stroke-width="0.28"><text x="1218.300" y="652.600" textLength="51.700" lengthAdjust="spacingAndGlyphs">Mantener</text><text x="1218.300" y="675.200" textLength="65" lengthAdjust="spacingAndGlyphs">Reemplazar</text></g>
<path d="M1336.800 648L1340.100 651.200L1343.400 648M1336.800 670.600L1340.100 673.800L1343.400 670.600" fill="none" stroke="#e0e0e0" stroke-width="1.300"/>
<path d="M1214.800 698.200H1344V712H1210.800V702.200a4 4 0 0 1 4 -4Z" fill="#545454"/>
</g>
<path d="M5.700 708.400H1345V714H1.700V712.400a4 4 0 0 1 4 -4Z" fill="#303030"/>
<rect x="10.700" y="711.300" width="32.200" height="10" rx="4" fill="#292929" stroke="#3e3e3e" stroke-width="1"/>
<rect x="49" y="711.300" width="160.700" height="10" rx="4" fill="#292929" stroke="#3e3e3e" stroke-width="1"/>
<rect x="1125" y="711.400" width="58.800" height="10" rx="4" fill="#545454"/>
<rect x="1144" y="711.400" width="1" height="10" fill="#3a3a3a"/><rect x="1164" y="711.400" width="1" height="10" fill="#3a3a3a"/>
<rect x="1192.400" y="711.400" width="30.300" height="10" rx="4" fill="#222222"/>
<path d="M1234.300 711.400H1249.200V720H1230.300V714.200a4 4 0 0 1 4 -4Z" fill="#4772b3"/>
<path d="M1249.900 711.400H1265a4 4 0 0 1 4 4V720H1249.900Z" fill="#222222"/>
<path d="M1281.700 711.400H1295.700V720H1277.700V714.200a4 4 0 0 1 4 -4Z" fill="#545454"/>
<path d="M1296.500 711.400H1318a4 4 0 0 1 4 4V720H1296.500Z" fill="#222222"/>
<rect x="1336.400" y="711.400" width="20" height="10" rx="4" fill="#4772b3"/>
</svg>

</body></html>
